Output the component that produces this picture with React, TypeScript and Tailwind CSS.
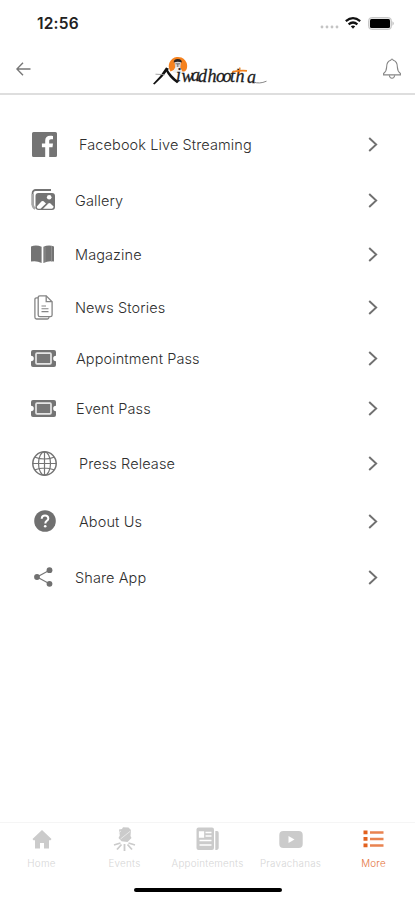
import React from "react"

const FacebookIcon = () => (
  <svg width="25" height="25" viewBox="0 0 25 25">
    <path
      fill="#747474"
      d="M1.500 0h22A1.500 1.500 0 0 1 25 1.500v22a1.500 1.500 0 0 1-1.500 1.500H17.200v-9.700h3.300l.5-3.800h-3.800V9.200c0-1.200.4-1.900 1.900-1.900H21V3.900c-.4-.1-1.500-.2-2.900-.2-2.900 0-4.900 1.800-4.900 5v2.800H9.900v3.800h3.300V25H1.500A1.500 1.500 0 0 1 0 23.500v-22A1.500 1.500 0 0 1 1.500 0z"
    />
  </svg>
)

const GalleryIcon = () => (
  <svg width="25" height="22" viewBox="0 0 25 22">
    <path d="M1.600 16V4a3 3 0 0 1 3-3h15.400" fill="none" stroke="#747474" strokeWidth="1.800" />
    <path d="M1.700 5v10.500c0 2.300 1 3.300 2.600 4.300" fill="none" stroke="#a8a8a8" strokeWidth="2.400" />
    <rect x="4.500" y="4" width="19.500" height="17" rx="3" fill="#747474" />
    <circle cx="18.200" cy="8.200" r="2.300" fill="#fff" />
    <path d="M5.800 17.500l4.800-5.200q1-.8 2 0l2.400 2.200-5.500 5.300H7q-1.400-.4-1.200-2.300z" fill="#fff" />
    <path d="M12 19.800l5.400-5.400q1-.8 2 0l3.200 3.200q0 2-1.800 2.200z" fill="#fff" />
  </svg>
)

const BookIcon = () => (
  <svg width="23" height="19" viewBox="0 0 23 19">
    <path d="M0 1.400Q5.500-.6 10.600 1.800V18Q5.500 15.400 0 16.600z" fill="#747474" />
    <path d="M23 1.400Q17.500-.6 12.400 1.800V18q5.100-2.600 10.600-1.400z" fill="#747474" />
    <path d="M20.500 1v15.500M14 2v15" stroke="#999" strokeWidth=".7" />
  </svg>
)

const DocumentsIcon = () => (
  <svg width="19" height="25" viewBox="0 0 19 25" fill="none" stroke="#858585" strokeWidth="1.300">
    <path d="M4.200 2.800H2.600Q.9 2.800.9 4.500v17.700q0 1.800 1.700 1.800h10.800q1.500 0 1.700-2.200" />
    <path d="M5.900.8h6.300l5.900 5.900v13.200q0 1.800-1.700 1.800H5.900q-1.700 0-1.700-1.800V2.500Q4.200.8 5.900.8z" />
    <path d="M12.200.8v5.900h5.900" />
    <path d="M7.500 11h4.500M7.500 13.800h7M7.500 16.600h7" strokeWidth="1.100" />
  </svg>
)

const TicketIcon = () => (
  <svg width="25" height="17" viewBox="0 0 25 17">
    <path
      fill="#747474"
      d="M2 0h21a2 2 0 0 1 2 2v3.700a2.800 2.800 0 0 0 0 5.600V15a2 2 0 0 1-2 2H2a2 2 0 0 1-2-2v-3.700a2.800 2.800 0 0 0 0-5.600V2a2 2 0 0 1 2-2z"
    />
    <rect x="5" y="3.200" width="15" height="10.600" rx="1" fill="#787878" stroke="#e6e6e6" strokeWidth="1.700" />
  </svg>
)

const GlobeIcon = () => (
  <svg width="25" height="25" viewBox="0 0 25 25" fill="none" stroke="#747474" strokeWidth="1.200">
    <circle cx="12.500" cy="12.500" r="11.700" strokeWidth="1.500" />
    <ellipse cx="12.500" cy="12.500" rx="6" ry="11.700" />
    <path d="M12.500.8v23.400M.8 12.500h23.400M3 6.200q9.500 3.600 19 0M3 18.800q9.500-3.600 19 0" />
  </svg>
)

const QuestionIcon = () => (
  <svg width="22" height="22" viewBox="0 0 22 22">
    <circle cx="11" cy="11" r="10.800" fill="#707070" />
    <path
      d="M7.700 8.700Q7.900 5.600 11 5.600T14.300 8.400c0 2.500-3 2.400-3 5"
      fill="none"
      stroke="#fff"
      strokeWidth="2"
    />
    <circle cx="11.200" cy="16.300" r="1.300" fill="#fff" />
  </svg>
)

const ShareIcon = () => (
  <svg width="19" height="20" viewBox="0 0 19 20" fill="#707070">
    <path d="M15.500 3.200L3 10l12.500 6.800" fill="none" stroke="#777" strokeWidth="1.200" />
    <circle cx="15.500" cy="3.200" r="2.900" />
    <circle cx="3" cy="10" r="2.900" />
    <circle cx="15.500" cy="16.800" r="2.900" />
  </svg>
)

const Logo = () => (
  <svg width="114" height="30" viewBox="0 0 114 30">
    <path d="M17.500 15.500A9.200 9.200 0 1 1 33.500 13.500q-1 2.500-4.500 2.300l-3-4z" fill="#f5821f" />
    <path d="M21.500 5.500q3.500-4 6.500 0l-.6 5.500q-2.600 3-5.300 0z" fill="#d9d5d5" />
    <path d="M20.800 6.500q-.3-3.500 4-3.500t4 3.500q-4-1.500-8 0z" fill="#292321" />
    <path d="M19.500 16l3-5h4.500l3 5.500-5 1z" fill="#eee" />
    <path d="M22.500 7.800h4.500M24.800 8v3" stroke="#555" strokeWidth=".8" />
    <path d="M0 27.800Q8 20 13 11.500l3 1.200Q9 22 1.500 28.500z" fill="#111" />
    <path d="M13.500 11.500q4.500 8.500 12.500 14l-2 1.800Q16 22 12.500 14z" fill="#111" />
    <path d="M2.500 18.200l9.500.5" stroke="#999" strokeWidth=".9" />
    <text
      x="23 28.500 38 45 54.500 63 69.500 77 82.500 94"
      y="25 25.500 25 26 26 26 25.500 25.500 26 27"
      fill="#1c1c1c"
      className="font-['Liberation_Serif',serif] text-[18px] italic"
      stroke="#1c1c1c"
      strokeWidth=".3"
    >
      iwadhootha
    </text>
    <path d="M79.500 15.800q8-1.800 14.500-1" fill="none" stroke="#f5821f" strokeWidth="1.700" />
    <path d="M87 11.500q-1 4-.5 6.500" fill="none" stroke="#f5821f" strokeWidth="1.300" />
    <path d="M101 26q5 2.300 12.500-.8" fill="none" stroke="#888" strokeWidth="1" />
  </svg>
)

const HomeIcon = () => (
  <svg width="20" height="19" viewBox="0 0 20 19" fill="#cbcbcb">
    <path d="M10 0l9.500 9-1 1.200H17V18.500h-5v-5.500H8v5.500H3v-8.300H1.500L.5 9z" />
  </svg>
)

const EventsIcon = () => (
  <svg width="23" height="24" viewBox="0 0 23 24" fill="#cbcbcb">
    <path d="M6 2.500l3-.5 1-1.800 5.500.3L18 3l-.5 6 1 2-4 4-6-.8L5.500 11l1.300-2.500z" />
    <path d="M5.500 6l2.500-2M7.500 12l10-8" stroke="#f5f5f5" strokeWidth=".7" />
    <path
      d="M7.500 16L1 18M8.500 17.500L4 22.500M11.500 17v7M14.500 17.500l4.500 5M15.500 16l6.500 2"
      stroke="#cbcbcb"
      strokeWidth="1.800"
    />
  </svg>
)

const NewspaperIcon = () => (
  <svg width="23" height="24" viewBox="0 0 23 24" fill="#cbcbcb">
    <rect x=".5" y=".5" width="17.500" height="22.500" rx="2" />
    <path d="M19.300 4H21q1.700 0 1.700 1.700v15q0 2.300-3.400 2.300z" />
    <path
      d="M3.500 5h4v5h-4zM9.500 5.500h6M9.500 9h6M3.500 13.500h12M3.500 18h12"
      fill="#fff"
      stroke="#fff"
      strokeWidth="1.300"
    />
  </svg>
)

const VideoIcon = () => (
  <svg width="24" height="17" viewBox="0 0 24 17">
    <rect x=".3" width="23.400" height="17" rx="4" fill="#cbcbcb" />
    <path d="M9.500 5l6 3.500-6 3.500z" fill="#fff" />
  </svg>
)

const MoreIcon = () => (
  <svg width="21" height="18" viewBox="0 0 21 18">
    <path d="M.5 2.400h4M.5 8.900h4M.5 15.400h4" stroke="#e2611e" strokeWidth="3.600" />
    <path d="M7 2.400h13.500M7 8.900h13.500M7 15.400h13.500" stroke="#e98350" strokeWidth="2.500" />
  </svg>
)

const menuItems = [
  { label: "Facebook Live Streaming", icon: FacebookIcon, row: "h-14 pl-[30.500px]", gap: "ml-[20.500px]" },
  { label: "Gallery", icon: GalleryIcon, row: "h-14 pl-[29px]", gap: "ml-[18px]" },
  { label: "Magazine", icon: BookIcon, row: "h-[52px] pl-[28.500px]", gap: "ml-[18.500px]" },
  { label: "News Stories", icon: DocumentsIcon, row: "h-[54px] pl-[29px]", gap: "ml-[18px]" },
  { label: "Appointment Pass", icon: TicketIcon, row: "h-12 pl-[29px]", gap: "ml-[19px]" },
  { label: "Event Pass", icon: TicketIcon, row: "h-[52px] pl-[29px]", gap: "ml-[19px]" },
  { label: "Press Release", icon: GlobeIcon, row: "h-[58px] pl-[30.500px]", gap: "ml-[20.500px]" },
  { label: "About Us", icon: QuestionIcon, row: "h-[58px] pl-[31px]", gap: "ml-5" },
  { label: "Share App", icon: ShareIcon, row: "h-[54px] pl-[29px]", gap: "ml-[18px]" },
]

const tabs = [
  { label: "Home", icon: HomeIcon, color: "text-[#d6d6d6]" },
  { label: "Events", icon: EventsIcon, color: "text-[#d6d6d6]" },
  { label: "Appointements", icon: NewspaperIcon, color: "text-[#d6d6d6]" },
  { label: "Pravachanas", icon: VideoIcon, color: "text-[#d6d6d6]" },
  { label: "More", icon: MoreIcon, color: "text-[#e5743c]" },
]

function StatusBar() {
  return (
    <div className="flex h-[46px] items-center justify-between pl-[37px] pr-5">
      <span className="mt-px text-[15.500px] font-semibold leading-none tracking-[0.2px] text-[#222]">12:56</span>
      <div className="flex items-center">
        <svg width="19" height="4" viewBox="0 0 19 4" fill="#c4c4c4" className="mt-2">
          <circle cx="2" cy="2" r="1.400" />
          <circle cx="7" cy="2" r="1.400" />
          <circle cx="12" cy="2" r="1.400" />
          <circle cx="17" cy="2" r="1.400" />
        </svg>
        <svg
          width="16"
          height="12"
          viewBox="0 0 16 12"
          className="ml-[6px]"
          fill="none"
          stroke="#111"
          strokeWidth="2.200"
        >
          <path d="M.8 4.200q7.200-6 14.400 0M3.600 7.300q4.400-3.600 8.800 0" />
          <path d="M5.800 9.300q2.200-1.600 4.400 0L8 11.700z" fill="#111" stroke="none" />
        </svg>
        <svg width="27" height="13" viewBox="0 0 27 13" className="ml-[7px]">
          <rect x=".6" y=".6" width="22.800" height="11.800" rx="3" fill="#e6e6e6" stroke="#c4c4c4" />
          <rect x="2" y="2" width="20" height="9" rx="1.500" fill="#000" />
          <path d="M24.500 4.300q2.500 2.200 0 4.400z" fill="#b5b5b5" />
        </svg>
      </div>
    </div>
  )
}

function Header() {
  return (
    <header className="flex h-[49px] items-center justify-between border-b-2 border-[#dedede] pl-4 pr-[14px]">
      <svg width="15" height="14" viewBox="0 0 15 14" fill="none" stroke="#777" strokeWidth="1.400" className="-mt-0.5">
        <path d="M14.500 7H1M7 .7L.9 7 7 13.300" />
      </svg>
      <div className="ml-[5px] mt-[3px]">
        <Logo />
      </div>
      <svg
        width="18"
        height="21"
        viewBox="0 0 18 21"
        fill="none"
        stroke="#858585"
        strokeWidth="1.100"
        className="-mt-0.5"
      >
        <path d="M7.700 2.300Q9-.2 10.300 2.300C13.500 3.200 14.400 6 14.400 9.300c0 3.500 1 4.700 3 6.200v1.400H.6v-1.400c2-1.500 3-2.700 3-6.200 0-3.300.9-6.100 4.100-7z" />
        <path d="M6.300 17.200q.4 3 2.700 3t2.700-3" />
      </svg>
    </header>
  )
}

export default function App() {
  return (
    <div className="flex h-[900px] w-[415px] flex-col overflow-hidden bg-white font-['Inter',sans-serif]">
      <StatusBar />
      <Header />

      <main className="flex-1 pt-[21px]">
        {menuItems.map(({ label, icon: Icon, row, gap }) => (
          <div key={label} className={`flex items-center pr-[37px] ${row}`}>
            <span className="flex w-7 justify-center">
              <Icon />
            </span>
            <span className={`mt-px text-[14.500px] font-light tracking-[0.1px] text-[#2e2e2e] ${gap}`}>{label}</span>
            <svg
              width="10"
              height="15"
              viewBox="0 0 10 15"
              className="ml-auto"
              fill="none"
              stroke="#707070"
              strokeWidth="1.900"
            >
              <path d="M1.200 1l7 6.500-7 6.500" />
            </svg>
          </div>
        ))}
      </main>

      <nav className="grid h-[60px] grid-cols-5 border-t border-[#f5f5f5]">
        {tabs.map(({ label, icon: Icon, color }) => (
          <div key={label} className="flex flex-col items-center pt-1">
            <span className="flex h-6 items-center">
              <Icon />
            </span>
            <span className={`mt-[7px] text-[9.800px] font-light leading-[12px] tracking-[0.25px] ${color}`}>
              {label}
            </span>
          </div>
        ))}
      </nav>
      <div className="flex h-[18px] justify-center pl-px pt-[5.500px]">
        <div className="h-[4.500px] w-[148px] rounded-full bg-black" />
      </div>
    </div>
  )
}
